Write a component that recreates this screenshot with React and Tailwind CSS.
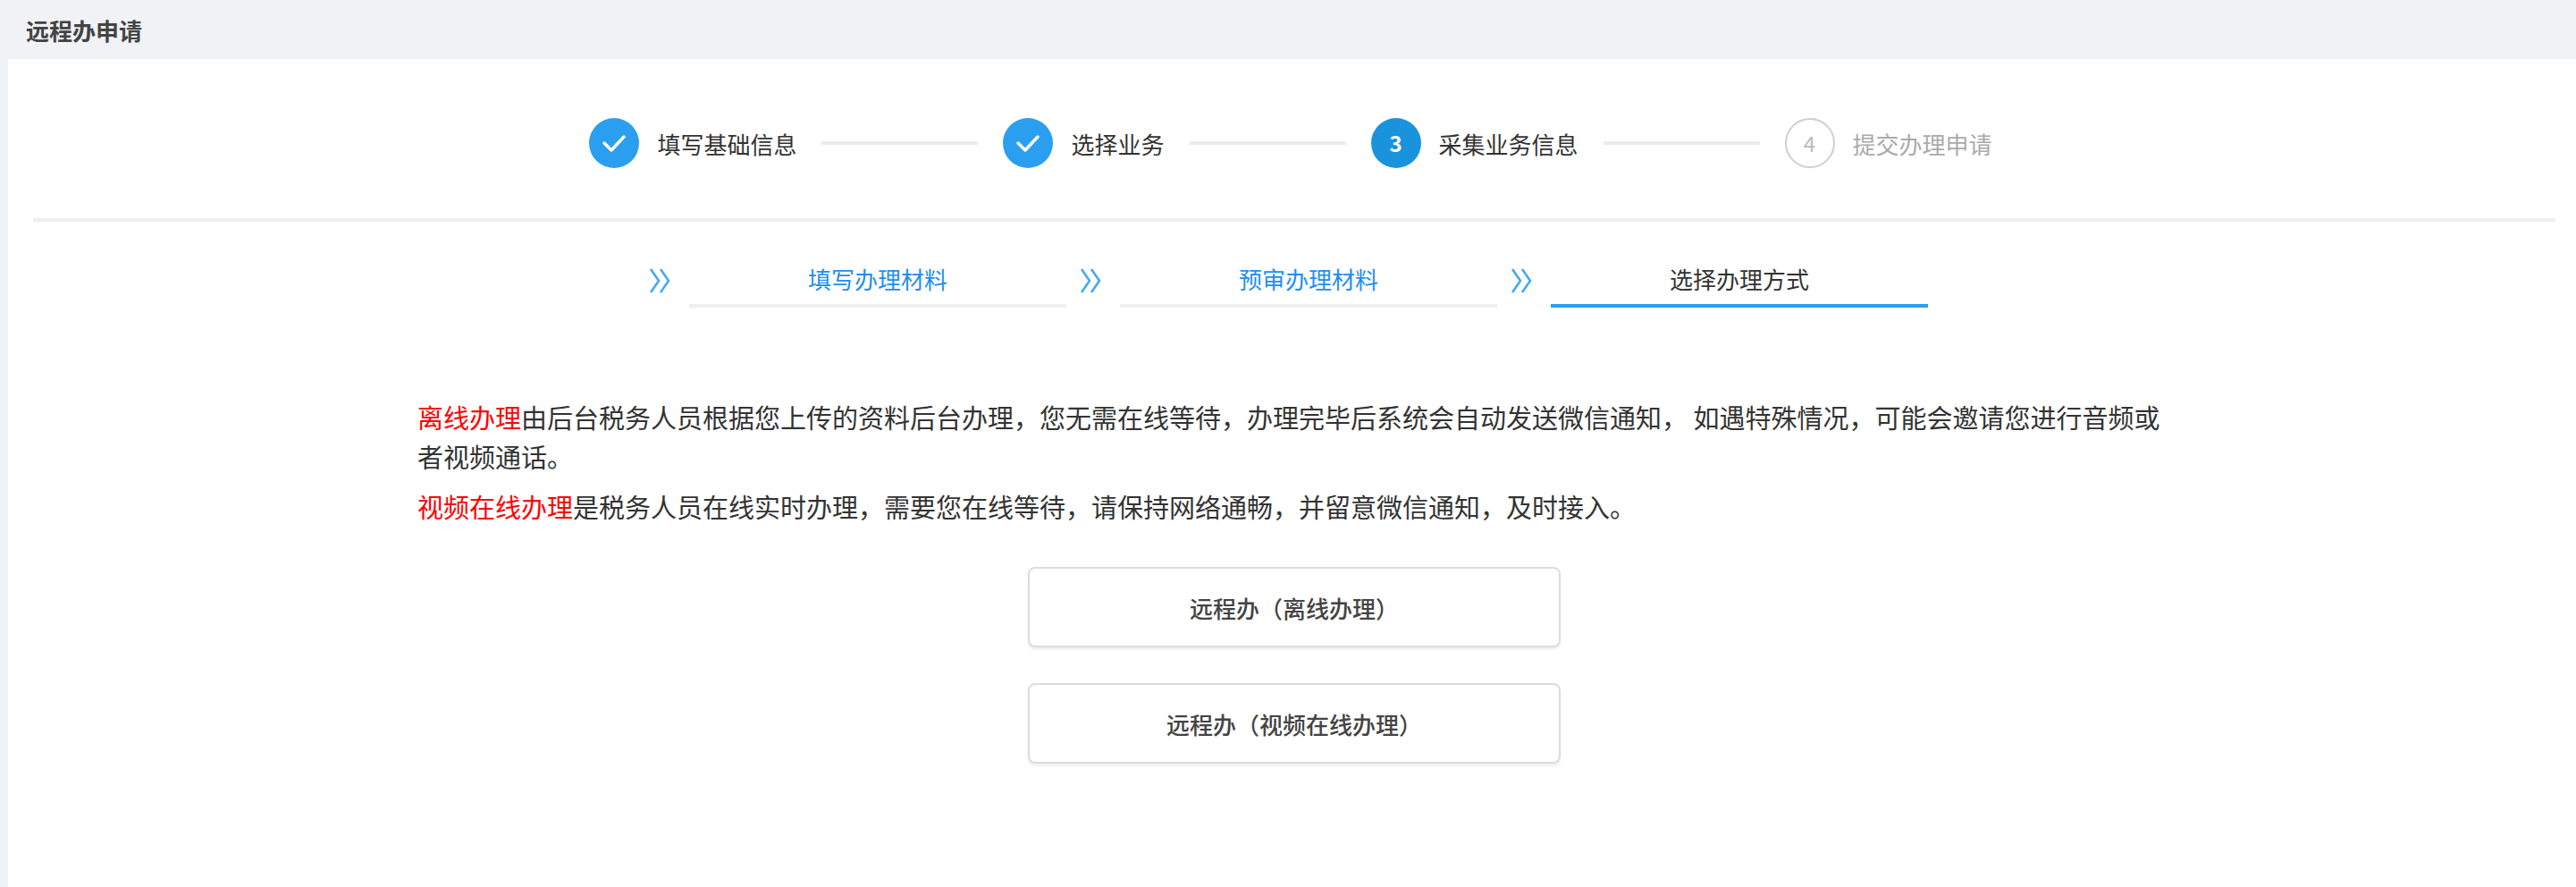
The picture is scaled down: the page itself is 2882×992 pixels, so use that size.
import React from 'react'

const font = { fontFamily: '"Noto Sans CJK SC", "Liberation Sans", sans-serif' }

const Check = () => (
  <svg viewBox="0 0 56 56" className="w-[56px] h-[56px]">
    <circle cx="28" cy="28" r="28" fill="#2a9ff0" />
    <path d="M17 28 L25 36 L39 21" fill="none" stroke="#fff" strokeWidth="3.5" strokeLinecap="round" strokeLinejoin="round" />
  </svg>
)

const Chevrons = () => (
  <svg viewBox="0 0 28 32" className="w-[28px] h-[32px]">
    <path d="M3 3 L12 16 L3 29 M14 3 L23 16 L14 29" fill="none" stroke="#3fa9f5" strokeWidth="2.5" />
  </svg>
)

const Line = () => <div className="w-[175px] h-[4px] bg-[#ececec] mx-[28px]" />

const Step = ({ icon, label, muted }) => (
  <div className="flex items-center">
    {icon}
    <span className={`ml-[20px] text-[26px] ${muted ? 'text-[#aaa]' : 'text-[#333]'}`}>{label}</span>
  </div>
)

const Tab = ({ label, active }) => (
  <div className="flex items-end">
    <div className="mb-[14px] mr-[18px]"><Chevrons /></div>
    <div className="w-[422px] flex flex-col items-center">
      <span className={`text-[26px] leading-[36px] ${active ? 'text-[#333]' : 'text-[#1e8ef0]'}`}>{label}</span>
      <div className={`mt-[10px] w-full h-[4px] ${active ? 'bg-[#2a9ff0]' : 'bg-[#eeeeee]'}`} />
    </div>
  </div>
)

const Btn = ({ children }) => (
  <button className="w-[596px] h-[90px] rounded-[8px] border-2 border-[#dcdcdc] bg-white shadow-[0_3px_3px_rgba(0,0,0,0.06)] text-[26px] font-medium text-[#444]">
    {children}
  </button>
)

const App = () => (
  <div className="min-h-[992px] bg-[#f0f2f5] flex flex-col" style={font}>
    <div className="h-[66px] flex items-center pl-[29px] text-[26px] font-bold text-[#444]">远程办申请</div>
    <div className="flex-1 bg-white ml-[9px] pl-[28px] pr-[23px]">
      <div className="h-[178px] flex items-center justify-center pt-[10px] pr-[8px]">
        <Step icon={<Check />} label="填写基础信息" />
        <Line />
        <Step icon={<Check />} label="选择业务" />
        <Line />
        <Step
          icon={<div className="w-[56px] h-[56px] rounded-full bg-[#1a93dd] text-white text-[24px] font-bold flex items-center justify-center">3</div>}
          label="采集业务信息"
        />
        <Line />
        <Step
          muted
          icon={<div className="w-[56px] h-[56px] rounded-full border-2 border-[#cfcfcf] text-[#bbb] text-[24px] flex items-center justify-center">4</div>}
          label="提交办理申请"
        />
      </div>
      <div className="h-[4px] bg-[#eeeeee]" />
      <div className="flex justify-center mt-[46px] gap-[14px] pr-[14px]">
        <Tab label="填写办理材料" />
        <Tab label="预审办理材料" />
        <Tab label="选择办理方式" active />
      </div>
      <div className="flex justify-center mt-[100px]">
        <div className="w-[1962px] text-[29px] leading-[44px] text-[#333]">
          <p>
            <span className="text-[#ff0000]">离线办理</span>
            由后台税务人员根据您上传的资料后台办理，您无需在线等待，办理完毕后系统会自动发送微信通知， 如遇特殊情况，可能会邀请您进行音频或者视频通话。
          </p>
          <p className="mt-[12px]">
            <span className="text-[#ff0000]">视频在线办理</span>
            是税务人员在线实时办理，需要您在线等待，请保持网络通畅，并留意微信通知，及时接入。
          </p>
        </div>
      </div>
      <div className="flex flex-col items-center gap-[40px] mt-[46px]">
        <Btn>远程办（离线办理）</Btn>
        <Btn>远程办（视频在线办理）</Btn>
      </div>
    </div>
  </div>
)

export default App
